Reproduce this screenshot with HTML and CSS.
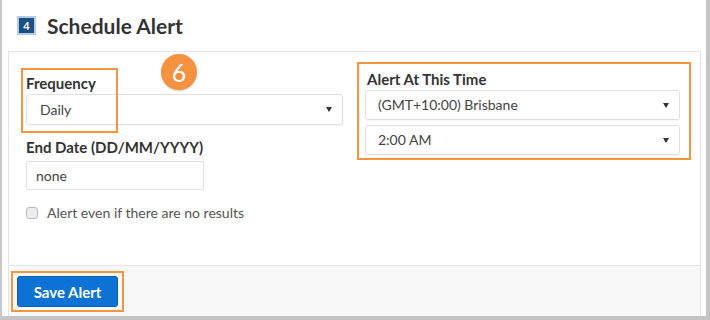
FILE: index.html
```html
<!DOCTYPE html>
<html lang="en">
  <head>
    <meta charset="UTF-8" />
    <meta name="viewport" content="width=device-width, initial-scale=1.0" />
    <title>Schedule Alert</title>
    <link rel="stylesheet" href="styles.css">
  </head>
  <body>
    <div class="frame">
      <!-- Step header -->
      <div class="header">
        <span class="step-num">4</span>
        <h2>Schedule Alert</h2>
      </div>

      <div class="panel">
        <div class="panel-body">
          <!-- Left column -->
          <div class="col">
            <label class="field-label">Frequency</label>
            <div class="select wide">Daily</div>

            <label class="field-label end-label">End Date (DD/MM/YYYY)</label>
            <div class="input">none</div>

            <label class="check">
              <span class="box"></span>
              Alert even if there are no results
            </label>
          </div>

          <!-- Right column -->
          <div class="col highlight time-col">
            <label class="field-label">Alert At This Time</label>
            <div class="select">(GMT+10:00) Brisbane</div>
            <div class="select">2:00 AM</div>
          </div>
        </div>

        <div class="footer">
          <div class="highlight save-wrap">
            <button class="save-btn">Save Alert</button>
          </div>
        </div>

        <!-- Annotations -->
        <div class="mark-freq"></div>
        <div class="step-badge">6</div>
      </div>
    </div>
  </body>
</html>
```

FILE: styles.css
```css
* {
  margin: 0;
  padding: 0;
  box-sizing: border-box;
  font-family: "Lato", "Liberation Sans", sans-serif;
}

body {
  background: #fff;
  color: #333;
}

.frame {
  width: 710px;
  height: 320px;
  border-left: 2px solid #c8c8c8;
  border-right: 4px solid #c4c4c4;
  border-bottom: 4px solid #c4c4c4;
  display: flex;
  flex-direction: column;
}

.header {
  height: 51px;
  display: flex;
  align-items: center;
  padding-left: 15px;
  gap: 11px;
}

.step-num {
  width: 19px;
  height: 19px;
  border: 2px solid #b3cbe4;
  background: #1c4f86;
  color: #fff;
  font-size: 11px;
  font-weight: 700;
  display: flex;
  align-items: center;
  justify-content: center;
}

h2 {
  font-size: 21px;
  font-weight: 700;
  color: #333;
}

.panel {
  flex: 1;
  margin: 0 5px 0 6px;
  border: 1px solid #e4e4e4;
  border-bottom: none;
  display: flex;
  flex-direction: column;
  position: relative;
}

.panel-body {
  height: 213px;
  display: grid;
  grid-template-columns: 317px 334px;
  gap: 14px;
  padding: 0 9px 0 17px;
}

.col {
  display: flex;
  flex-direction: column;
  align-items: flex-start;
}

.col:first-child {
  padding-top: 21px;
}

.field-label {
  font-size: 15px;
  font-weight: 700;
  line-height: 20px;
  color: #333;
}

.end-label {
  margin-top: 12px;
}

.select {
  position: relative;
  width: 100%;
  height: 30px;
  border: 1px solid #e0e0e0;
  border-radius: 3px;
  padding-left: 12px;
  font-size: 14px;
  line-height: 28px;
  color: #444;
  box-shadow: 0 1px 1px rgba(0, 0, 0, 0.04);
}

.select.wide {
  height: 31px;
  margin-top: 1px;
  padding-left: 13px;
  line-height: 29px;
}

.select::after {
  content: "";
  position: absolute;
  right: 10px;
  top: 12px;
  border-left: 3px solid transparent;
  border-right: 3px solid transparent;
  border-top: 5px solid #333;
}

.input {
  width: 178px;
  height: 29px;
  margin-top: 4px;
  border: 1px solid #e0e0e0;
  border-radius: 2px;
  padding-left: 9px;
  font-size: 14px;
  line-height: 27px;
  color: #444;
}

.check {
  margin-top: 14px;
  display: flex;
  align-items: center;
  gap: 9px;
  font-size: 14px;
  color: #555;
}

.check .box {
  width: 12px;
  height: 12px;
  border: 1px solid #bbb;
  border-radius: 3px;
  background: #eee;
}

/* orange annotation boxes */
.highlight {
  border: 2px solid #f7943e;
}

.time-col {
  margin-top: 10px;
  height: 98px;
  padding: 3px 9px 0 6px;
  gap: 5px;
}

.time-col .field-label {
  margin: 2px 0 -4px 2px;
}

.footer {
  flex: 1;
  background: #f8f8f8;
  border-top: 1px solid #e6e6e6;
  padding: 5px 0 0 2px;
}

.save-wrap {
  display: inline-block;
  padding: 3px 4px 3px;
}

.save-btn {
  display: block;
  width: 101px;
  height: 31px;
  border: 1px solid #0b5fae;
  border-radius: 3px;
  background: #0c72d6;
  color: #fff;
  font-size: 15px;
  font-weight: 700;
  cursor: pointer;
}

.mark-freq {
  position: absolute;
  left: 12px;
  top: 16px;
  width: 97px;
  height: 65px;
  border: 2px solid #f7943e;
}

.step-badge {
  position: absolute;
  left: 152px;
  top: 2px;
  width: 36px;
  height: 36px;
  border-radius: 50%;
  background: #f5923f;
  color: #fff;
  font-size: 25px;
  line-height: 36px;
  text-align: center;
  box-shadow: 0 1px 2px rgba(0, 0, 0, 0.2);
}
```
